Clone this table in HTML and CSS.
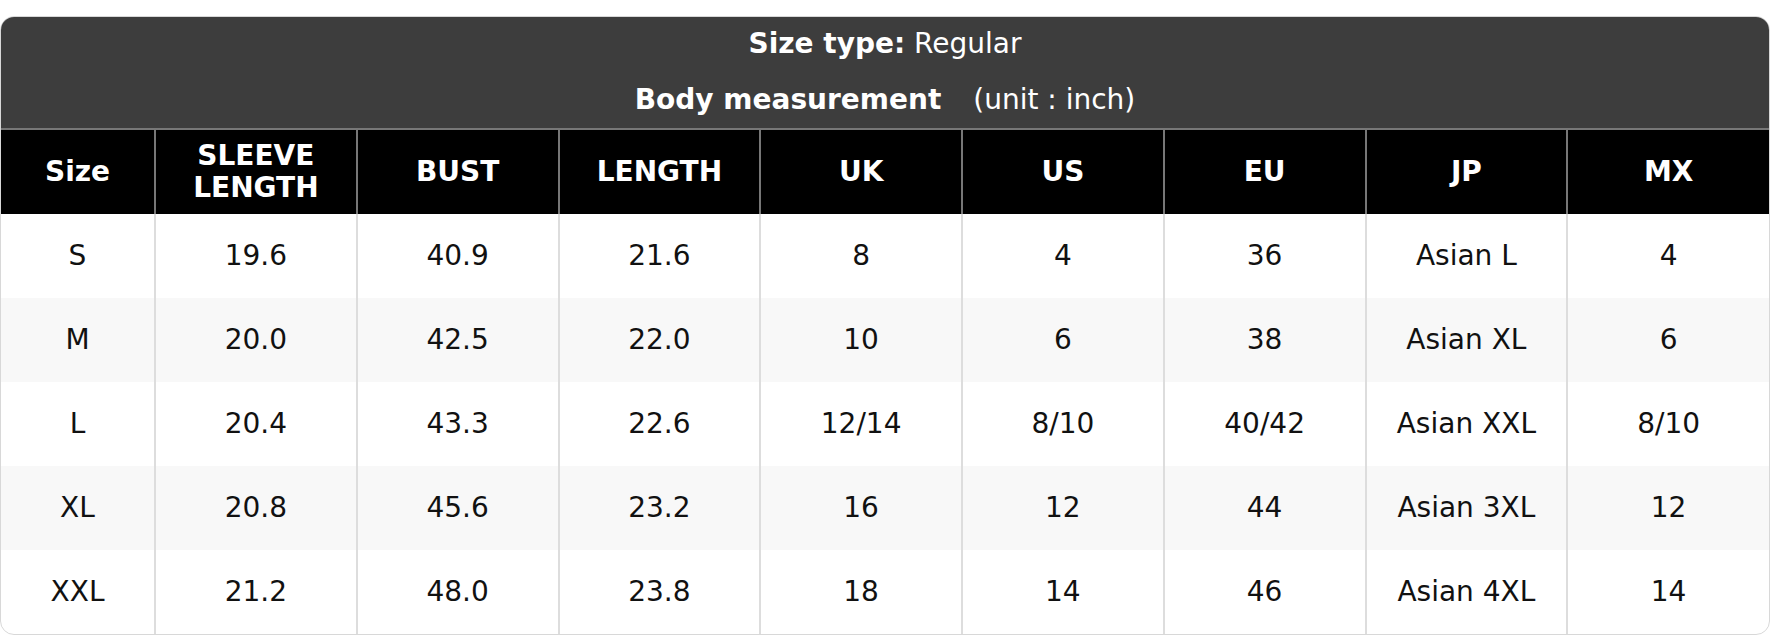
FILE: index.html
```html
<!DOCTYPE html>
<html lang="en">
<head>
<meta charset="utf-8">
<title>Size chart</title>
<link rel="stylesheet" href="styles.css">
</head>
<body>
<div class="chart">
  <div class="caption">
    <p class="cap-line"><strong>Size type:</strong> Regular</p>
    <p class="cap-line"><strong>Body measurement</strong><span class="unit">(unit : inch)</span></p>
  </div>
  <table class="sizes">
    <colgroup>
      <col class="c-size">
      <col span="8">
    </colgroup>
    <thead>
      <tr>
        <th>Size</th><th>SLEEVE<br>LENGTH</th><th>BUST</th><th>LENGTH</th><th>UK</th><th>US</th><th>EU</th><th>JP</th><th>MX</th>
      </tr>
    </thead>
    <tbody>
      <tr><td>S</td><td>19.6</td><td>40.9</td><td>21.6</td><td>8</td><td>4</td><td>36</td><td>Asian L</td><td>4</td></tr>
      <tr><td>M</td><td>20.0</td><td>42.5</td><td>22.0</td><td>10</td><td>6</td><td>38</td><td>Asian XL</td><td>6</td></tr>
      <tr><td>L</td><td>20.4</td><td>43.3</td><td>22.6</td><td>12/14</td><td>8/10</td><td>40/42</td><td>Asian XXL</td><td>8/10</td></tr>
      <tr><td>XL</td><td>20.8</td><td>45.6</td><td>23.2</td><td>16</td><td>12</td><td>44</td><td>Asian 3XL</td><td>12</td></tr>
      <tr><td>XXL</td><td>21.2</td><td>48.0</td><td>23.8</td><td>18</td><td>14</td><td>46</td><td>Asian 4XL</td><td>14</td></tr>
    </tbody>
  </table>
</div>
</body>
</html>
```
FILE: styles.css
```css
* { box-sizing: border-box; }
html, body { margin: 0; padding: 0; background: #ffffff; }
body {
  font-family: "DejaVu Sans", "Liberation Sans", sans-serif;
  font-size: 28px;
  color: #111111;
  padding-top: 16px;
}
.chart {
  width: 1770px;
  border: 1px solid #d8d8d8;
  border-radius: 14px;
  overflow: hidden;
  background: #ffffff;
}
.caption {
  background: #3d3d3d;
  color: #ffffff;
  padding: 8px 0 9px;
  display: flex;
  flex-direction: column;
  gap: 18px;
  text-align: center;
}
.cap-line {
  margin: 0;
  line-height: 38px;
}
.unit { margin-left: 32px; }
.sizes {
  width: 100%;
  border-collapse: collapse;
  table-layout: fixed;
}
.c-size { width: 154px; }
.sizes th {
  background: #000000;
  color: #ffffff;
  font-weight: bold;
  height: 85px;
  line-height: 32px;
  padding: 0 4px;
  border-top: 2px solid #777777;
  border-left: 2px solid #777777;
  text-align: center;
}
.sizes td {
  height: 84px;
  text-align: center;
  padding: 0 4px 2px;
  border-left: 2px solid #dddddd;
}
.sizes th:first-child, .sizes td:first-child { border-left: none; }
.sizes tbody tr:nth-child(even) td { background: #f8f8f8; }
```
